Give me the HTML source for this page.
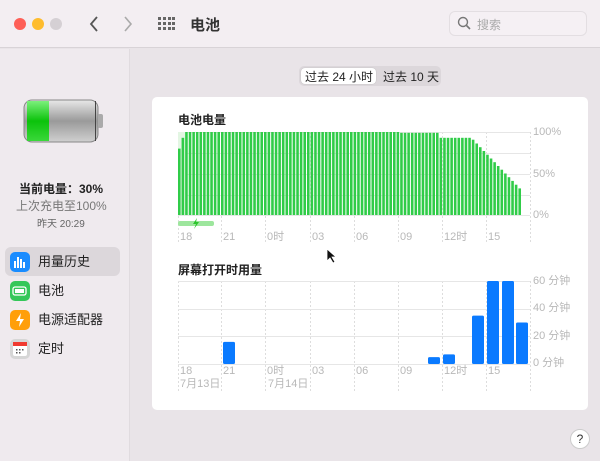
<!DOCTYPE html>
<html><head><meta charset="utf-8"><style>
*{margin:0;padding:0;box-sizing:border-box}
body{width:600px;height:461px;overflow:hidden;font-family:"Liberation Sans","Noto Sans CJK SC",sans-serif;background:#e9e4e8;position:relative;color:#222}
.tb{position:absolute;left:0;top:0;width:600px;height:48px;background:#f3eef2;border-bottom:1px solid #d8d3d7}
.side{position:absolute;left:0;top:49px;width:130px;height:412px;background:#efeaee;border-right:1px solid #e0dbdf}
.dot{position:absolute;top:18px;width:12px;height:12px;border-radius:50%}
.card{position:absolute;left:152px;top:97px;width:436px;height:313px;background:#fff;border-radius:5px}
.t{position:absolute;white-space:nowrap}
.lbl{position:absolute;font-size:11px;line-height:13px;height:13px;color:#b8b8b8;white-space:nowrap}
.si{position:absolute;left:10px;width:20px;height:20px;border-radius:5px}
.sl{position:absolute;left:38px;font-size:13px;line-height:18px;color:#222}
</style></head><body>
<div class="tb">
<div class="dot" style="left:14px;background:#fe5f57"></div>
<div class="dot" style="left:32px;background:#febc2e"></div>
<div class="dot" style="left:50px;background:#d5d0d4"></div>
<svg class="t" style="left:88px;top:14px" width="12" height="20"><path d="M9 3 L3 10 L9 17" fill="none" stroke="#555" stroke-width="1.8"/></svg>
<svg class="t" style="left:122px;top:14px" width="12" height="20"><path d="M3 3 L9 10 L3 17" fill="none" stroke="#aaa" stroke-width="1.6"/></svg>
<svg class="t" style="left:158px;top:17px" width="17" height="15"><g fill="#666"><rect x="0" y="0" width="3" height="3"/><rect x="5" y="0" width="3" height="3"/><rect x="10" y="0" width="3" height="3"/><rect x="14" y="0" width="3" height="3"/><rect x="0" y="5" width="3" height="3"/><rect x="5" y="5" width="3" height="3"/><rect x="10" y="5" width="3" height="3"/><rect x="14" y="5" width="3" height="3"/><rect x="0" y="10" width="3" height="3"/><rect x="5" y="10" width="3" height="3"/><rect x="10" y="10" width="3" height="3"/><rect x="14" y="10" width="3" height="3"/></g></svg>
<div class="t" style="left:190px;top:14px;font-size:15px;font-weight:bold;color:#333">电池</div>
<div class="t" style="left:449px;top:11px;width:138px;height:25px;border:1px solid #e3dee2;border-radius:6px;background:#f5f0f4"></div>
<svg class="t" style="left:457px;top:16px" width="14" height="14"><circle cx="6" cy="6" r="4.5" fill="none" stroke="#777" stroke-width="1.4"/><path d="M9.5 9.5 L13 13" stroke="#777" stroke-width="1.6"/></svg>
<div class="t" style="left:477px;top:16px;font-size:12px;color:#aaa">搜索</div>
</div>
<div class="side">
<svg class="t" style="left:22px;top:49px" width="82" height="48"><defs><linearGradient id="g1" x1="0" y1="0" x2="0" y2="1"><stop offset="0" stop-color="#e8e8e8"/><stop offset=".5" stop-color="#9a9a9a"/><stop offset="1" stop-color="#d0d0d0"/></linearGradient><linearGradient id="g2" x1="0" y1="0" x2="0" y2="1"><stop offset="0" stop-color="#7cf07c"/><stop offset=".5" stop-color="#0bc20b"/><stop offset="1" stop-color="#3ad83a"/></linearGradient></defs>
<rect x="2" y="2" width="74" height="42" rx="8" fill="url(#g1)" stroke="#888"/><rect x="5" y="3" width="22" height="40" fill="url(#g2)"/><rect x="73" y="3" width="1" height="40" fill="#444"/><rect x="76" y="16" width="5" height="14" rx="2" fill="#aaa"/></svg>
<div class="t" style="left:19px;top:131px;font-size:12px;font-weight:bold;color:#222">当前电量：30%</div>
<div class="t" style="left:16px;top:148px;font-size:12px;color:#777">上次充电至100%</div>
<div class="t" style="left:37px;top:166px;font-size:10px;color:#666">昨天 20:29</div>
<div class="t" style="left:5px;top:198px;width:115px;height:29px;background:#dcd7db;border-radius:6px"></div>
<div class="si" style="top:203px;background:#1a8cff"><svg width="20" height="20"><g fill="#fff"><rect x="4" y="9" width="2" height="7"/><rect x="7" y="5" width="2" height="11"/><rect x="10" y="7" width="2" height="9"/><rect x="13" y="10" width="2" height="6"/></g></svg></div>
<div class="sl" style="top:204px">用量历史</div>
<div class="si" style="top:232px;background:#34c759"><svg width="20" height="20"><rect x="3" y="6" width="13" height="8" rx="2" fill="none" stroke="#fff" stroke-width="1.3"/><rect x="5" y="8" width="9" height="4" fill="#fff"/></svg></div>
<div class="sl" style="top:233px">电池</div>
<div class="si" style="top:261px;background:#ff9f0a"><svg width="20" height="20"><path d="M11 3 L6 11 L10 11 L9 17 L14 9 L10 9 Z" fill="#fff"/></svg></div>
<div class="sl" style="top:262px">电源适配器</div>
<div class="si" style="top:290px;background:#d6d6d6"><svg width="20" height="20"><rect x="3" y="3" width="14" height="14" rx="2" fill="#fff"/><rect x="3" y="3" width="14" height="4" fill="#f03a30"/><g fill="#555"><rect x="6" y="10" width="1.5" height="1.5"/><rect x="9" y="10" width="1.5" height="1.5"/><rect x="12" y="10" width="1.5" height="1.5"/><rect x="6" y="13" width="1.5" height="1.5"/><rect x="9" y="13" width="1.5" height="1.5"/></g></svg></div>
<div class="sl" style="top:291px">定时</div>
</div>
<div class="t" style="left:299px;top:66px;width:142px;height:20px;background:#dcd7db;border-radius:5px"></div>
<div class="t" style="left:301px;top:68px;width:75px;height:16px;background:#fff;border-radius:4px;box-shadow:0 0 1px #aaa"></div>
<div class="t" style="left:305px;top:68px;font-size:12px;color:#222">过去 24 小时</div>
<div class="t" style="left:383px;top:68px;font-size:12px;color:#222">过去 10 天</div>
<div class="card"></div>
<div class="t" style="left:178px;top:111px;font-size:12px;font-weight:bold;color:#222">电池电量</div>
<div class="t" style="left:178px;top:261px;font-size:12px;font-weight:bold;color:#222">屏幕打开时用量</div>
<svg id="ch" class="t" style="left:0;top:0" width="600" height="461"></svg>
<div class="lbl" style="left:533px;top:126px">100%</div>
<div class="lbl" style="left:533px;top:168px">50%</div>
<div class="lbl" style="left:533px;top:209px">0%</div>
<div class="lbl" style="left:533px;top:275px">60 分钟</div>
<div class="lbl" style="left:533px;top:302px">40 分钟</div>
<div class="lbl" style="left:533px;top:330px">20 分钟</div>
<div class="lbl" style="left:533px;top:357px">0 分钟</div>
<div id="xl"></div>
<div class="lbl" style="left:180px;top:378px">7月13日</div>
<div class="lbl" style="left:268px;top:378px">7月14日</div>
<div class="t" style="left:570px;top:429px;width:20px;height:20px;border-radius:50%;background:#fff;border:1px solid #ccc;font-size:12px;text-align:center;line-height:18px;color:#333">?</div>
<svg class="t" style="left:326px;top:248px" width="12" height="16"><path d="M1 1 L1 13 L4 10 L7 15 L9 14 L6 9 L10 9 Z" fill="#111" stroke="#fff" stroke-width=".8"/></svg>
<script>
var s='',ns=document.getElementById('ch');
var xs=[178,221,265,310,354,398,442,486,530];
xs.forEach(function(x){s+='<line x1="'+(x+.5)+'" y1="132" x2="'+(x+.5)+'" y2="243" stroke="#ddd" stroke-dasharray="2,2"/>';
s+='<line x1="'+(x+.5)+'" y1="281" x2="'+(x+.5)+'" y2="392" stroke="#ddd" stroke-dasharray="2,2"/>';});
[132,153,174,195,215].forEach(function(y){s+='<line x1="178" x2="530" y1="'+(y+.5)+'" y2="'+(y+.5)+'" stroke="#e6e6e6"/>';});
[281,309,336,364].forEach(function(y){s+='<line x1="178" x2="530" y1="'+(y+.5)+'" y2="'+(y+.5)+'" stroke="#e6e6e6"/>';});
s+='<rect x="178" y="132" width="8" height="83" fill="#e3f6e3"/>';
s+='<rect x="178" y="221" width="36" height="5" rx="2" fill="#9de69d"/>';
s+='<path d="M197 218 L193 224 L196 224 L194 229 L199 222 L196 222 Z" fill="#2cc52c"/>';
var n=96,w=344/n;
for(var i=0;i<n;i++){var x=178+i*w,p;
if(i==0)p=80;else if(i==1)p=93;else if(x<397)p=100;else if(x<437)p=99;else if(x<470)p=93;else p=93-(x-470)/(520-470)*63;
var h=83*p/100;s+='<rect x="'+x.toFixed(2)+'" y="'+(215-h).toFixed(1)+'" width="'+(w-1).toFixed(2)+'" height="'+h.toFixed(1)+'" fill="#30cc48"/>';}
[[223,16],[428,5],[443,7],[472,35],[487,60],[502,60],[516,30]].forEach(function(b){var h=83*b[1]/60;s+='<rect x="'+b[0]+'" y="'+(364-h)+'" width="12" height="'+h+'" rx="1.5" fill="#0a7aff"/>';});
ns.innerHTML=s;
var L=['18','21','0时','03','06','09','12时','15'],t='';
L.forEach(function(l,i){t+='<div class="lbl" style="left:'+(xs[i]+2)+'px;top:231px">'+l+'</div><div class="lbl" style="left:'+(xs[i]+2)+'px;top:365px">'+l+'</div>';});
document.getElementById('xl').innerHTML=t;
</script>
</body></html>
